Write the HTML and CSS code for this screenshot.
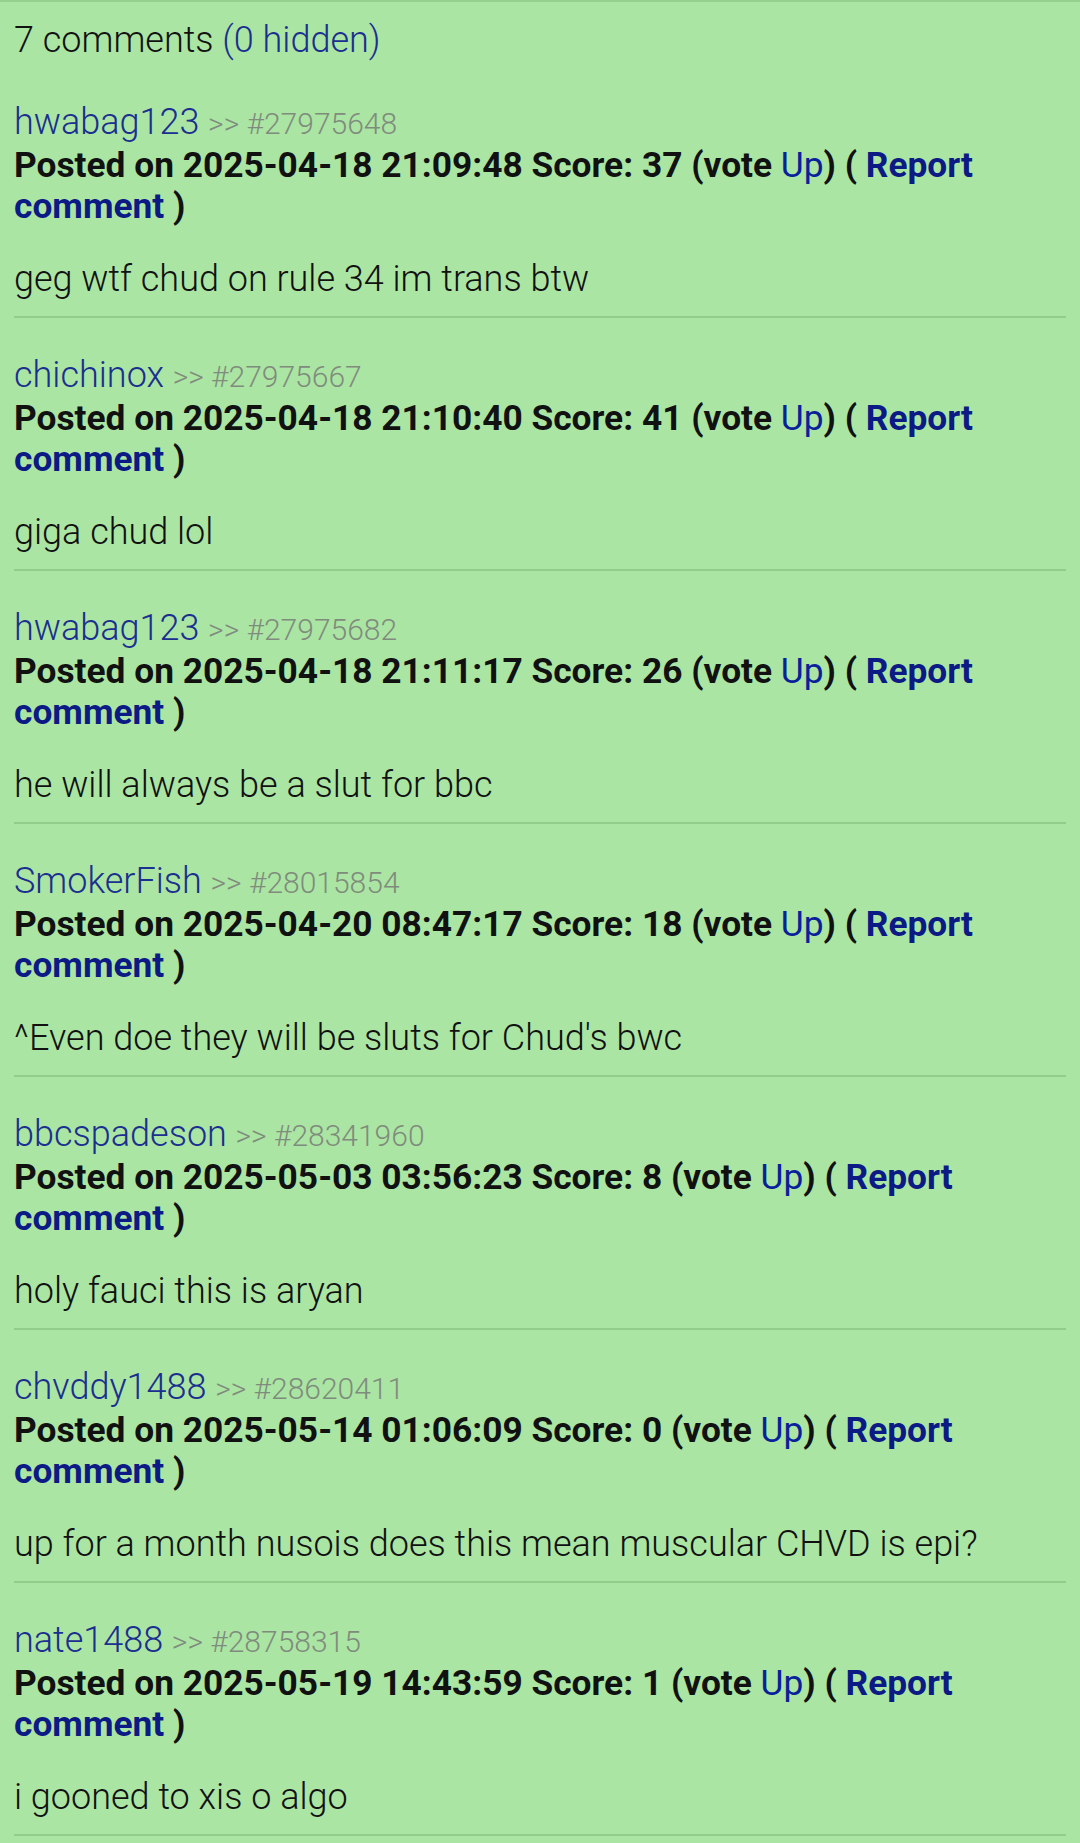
FILE: index.html
```html
<!DOCTYPE html>
<html lang="en">
<head>
    <meta charset="UTF-8">
    <meta name="viewport" content="width=device-width, initial-scale=1.0">
    <title>Comments</title>
    <link rel="stylesheet" href="styles.css">
</head>
<body>
    <section class="comments">
        <div class="comments-count">7 comments <a href="#" class="hidden-link">(0 hidden)</a></div>

        <div class="comment">
            <div class="comment-author"><a href="#" class="user">hwabag123</a> <span class="post-id">&gt;&gt; #27975648</span></div>
            <div class="comment-meta">Posted on 2025-04-18 21:09:48 Score: 37 (vote <a href="#" class="vote">Up</a>) ( <a href="#" class="report">Report comment</a> )</div>
            <div class="comment-body">geg wtf chud on rule 34 im trans btw</div>
        </div>

        <div class="comment">
            <div class="comment-author"><a href="#" class="user">chichinox</a> <span class="post-id">&gt;&gt; #27975667</span></div>
            <div class="comment-meta">Posted on 2025-04-18 21:10:40 Score: 41 (vote <a href="#" class="vote">Up</a>) ( <a href="#" class="report">Report comment</a> )</div>
            <div class="comment-body">giga chud lol</div>
        </div>

        <div class="comment">
            <div class="comment-author"><a href="#" class="user">hwabag123</a> <span class="post-id">&gt;&gt; #27975682</span></div>
            <div class="comment-meta">Posted on 2025-04-18 21:11:17 Score: 26 (vote <a href="#" class="vote">Up</a>) ( <a href="#" class="report">Report comment</a> )</div>
            <div class="comment-body">he will always be a slut for bbc</div>
        </div>

        <div class="comment">
            <div class="comment-author"><a href="#" class="user">SmokerFish</a> <span class="post-id">&gt;&gt; #28015854</span></div>
            <div class="comment-meta">Posted on 2025-04-20 08:47:17 Score: 18 (vote <a href="#" class="vote">Up</a>) ( <a href="#" class="report">Report comment</a> )</div>
            <div class="comment-body">^Even doe they will be sluts for Chud's bwc</div>
        </div>

        <div class="comment">
            <div class="comment-author"><a href="#" class="user">bbcspadeson</a> <span class="post-id">&gt;&gt; #28341960</span></div>
            <div class="comment-meta">Posted on 2025-05-03 03:56:23 Score: 8 (vote <a href="#" class="vote">Up</a>) ( <a href="#" class="report">Report comment</a> )</div>
            <div class="comment-body">holy fauci this is aryan</div>
        </div>

        <div class="comment">
            <div class="comment-author"><a href="#" class="user">chvddy1488</a> <span class="post-id">&gt;&gt; #28620411</span></div>
            <div class="comment-meta">Posted on 2025-05-14 01:06:09 Score: 0 (vote <a href="#" class="vote">Up</a>) ( <a href="#" class="report">Report comment</a> )</div>
            <div class="comment-body">up for a month nusois does this mean muscular CHVD is epi?</div>
        </div>

        <div class="comment">
            <div class="comment-author"><a href="#" class="user">nate1488</a> <span class="post-id">&gt;&gt; #28758315</span></div>
            <div class="comment-meta">Posted on 2025-05-19 14:43:59 Score: 1 (vote <a href="#" class="vote">Up</a>) ( <a href="#" class="report">Report comment</a> )</div>
            <div class="comment-body">i gooned to xis o algo</div>
        </div>
    </section>
</body>
</html>
```

FILE: styles.css
```css
body {
    margin: 0;
    padding: 0;
    background-color: #abe5a3;
    color: #111;
    font-family: Roboto, "Noto Sans", Arial, sans-serif;
    font-size: 35px;
    line-height: 41px;
}

a {
    text-decoration: none;
}

.comments {
    border-top: 2px solid #96d08f;
    padding: 0 14px;
}

.comments-count {
    font-size: 36px;
    font-weight: 300;
    margin-top: 18px;
    margin-bottom: 42px;
}

.hidden-link {
    color: #1a2f8f;
}

.comment {
    border-bottom: 2px solid #93cd8c;
    padding-bottom: 16px;
    margin-bottom: 38px;
}

.comment-author {
    line-height: 39px;
}

.user {
    color: #1a2f8f;
    font-size: 36px;
    font-weight: 300;
}

.post-id {
    color: #7f8c7d;
    font-size: 30px;
    font-weight: 300;
}

.comment-meta {
    font-size: 35.3px;
    font-weight: 700;
    margin-top: 2px;
}

.vote {
    color: #0a1f9a;
    font-weight: 400;
}

.report {
    color: #0b1a85;
}

.comment-body {
    font-size: 36px;
    font-weight: 300;
    margin-top: 32px;
}
```
